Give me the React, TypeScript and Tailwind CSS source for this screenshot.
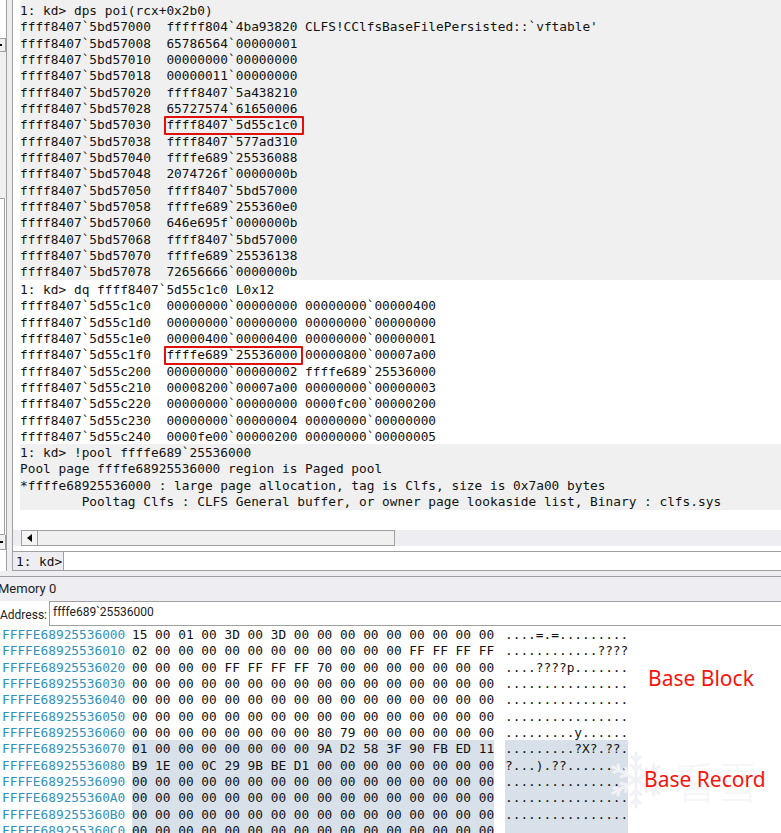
const dpsLines = [
  "1: kd> dps poi(rcx+0x2b0)",
  "ffff8407`5bd57000  fffff804`4ba93820 CLFS!CClfsBaseFilePersisted::`vftable'",
  "ffff8407`5bd57008  65786564`00000001",
  "ffff8407`5bd57010  00000000`00000000",
  "ffff8407`5bd57018  00000011`00000000",
  "ffff8407`5bd57020  ffff8407`5a438210",
  "ffff8407`5bd57028  65727574`61650006",
  "ffff8407`5bd57030  ffff8407`5d55c1c0",
  "ffff8407`5bd57038  ffff8407`577ad310",
  "ffff8407`5bd57040  ffffe689`25536088",
  "ffff8407`5bd57048  2074726f`0000000b",
  "ffff8407`5bd57050  ffff8407`5bd57000",
  "ffff8407`5bd57058  ffffe689`255360e0",
  "ffff8407`5bd57060  646e695f`0000000b",
  "ffff8407`5bd57068  ffff8407`5bd57000",
  "ffff8407`5bd57070  ffffe689`25536138",
  "ffff8407`5bd57078  72656666`0000000b",
];

const dqLines = [
  "1: kd> dq ffff8407`5d55c1c0 L0x12",
  "ffff8407`5d55c1c0  00000000`00000000 00000000`00000400",
  "ffff8407`5d55c1d0  00000000`00000000 00000000`00000000",
  "ffff8407`5d55c1e0  00000400`00000400 00000000`00000001",
  "ffff8407`5d55c1f0  ffffe689`25536000 00000800`00007a00",
  "ffff8407`5d55c200  00000000`00000002 ffffe689`25536000",
  "ffff8407`5d55c210  00008200`00007a00 00000000`00000003",
  "ffff8407`5d55c220  00000000`00000000 0000fc00`00000200",
  "ffff8407`5d55c230  00000000`00000004 00000000`00000000",
  "ffff8407`5d55c240  0000fe00`00000200 00000000`00000005",
];

const poolLines = [
  "1: kd> !pool ffffe689`25536000",
  "Pool page ffffe68925536000 region is Paged pool",
  "*ffffe68925536000 : large page allocation, tag is Clfs, size is 0x7a00 bytes",
  "        Pooltag Clfs : CLFS General buffer, or owner page lookaside list, Binary : clfs.sys",
];

const zeros = "00 00 00 00 00 00 00 00 00 00 00 00 00 00 00 00";
const dots = "................";

const memRows = [
  { addr: "FFFFE68925536000", hex: "15 00 01 00 3D 00 3D 00 00 00 00 00 00 00 00 00", ascii: "....=.=.........", sel: false },
  { addr: "FFFFE68925536010", hex: "02 00 00 00 00 00 00 00 00 00 00 00 FF FF FF FF", ascii: "............????", sel: false },
  { addr: "FFFFE68925536020", hex: "00 00 00 00 FF FF FF FF 70 00 00 00 00 00 00 00", ascii: "....????p.......", sel: false },
  { addr: "FFFFE68925536030", hex: zeros, ascii: dots, sel: false },
  { addr: "FFFFE68925536040", hex: zeros, ascii: dots, sel: false },
  { addr: "FFFFE68925536050", hex: zeros, ascii: dots, sel: false },
  { addr: "FFFFE68925536060", hex: "00 00 00 00 00 00 00 00 80 79 00 00 00 00 00 00", ascii: ".........y......", sel: false },
  { addr: "FFFFE68925536070", hex: "01 00 00 00 00 00 00 00 9A D2 58 3F 90 FB ED 11", ascii: ".........?X?.??.", sel: true },
  { addr: "FFFFE68925536080", hex: "B9 1E 00 0C 29 9B BE D1 00 00 00 00 00 00 00 00", ascii: "?...).??........", sel: true },
  { addr: "FFFFE68925536090", hex: zeros, ascii: dots, sel: true },
  { addr: "FFFFE689255360A0", hex: zeros, ascii: dots, sel: true },
  { addr: "FFFFE689255360B0", hex: zeros, ascii: dots, sel: true },
  { addr: "FFFFE689255360C0", hex: zeros, ascii: dots, sel: true },
];

function Lines({ lines }: { lines: string[] }) {
  return (
    <>
      {lines.map((line, i) => (
        <div key={i} className="h-[16.33px] whitespace-pre leading-[18px]">{line}</div>
      ))}
    </>
  );
}

function LeftStrip() {
  return (
    <div className="flex h-[571px] w-[13px] shrink-0">
      <div className="flex w-[7px] flex-col border-r border-[#a0a0a0] bg-white">
        <div className="h-[38px]" />
        <div className="flex h-[14px] items-center border-y border-r border-[#a0a0a0] bg-[#f0f0f0]">
          <div className="h-[2px] w-[2px] bg-black" />
        </div>
        <div className="h-[146px] bg-[#f0f0f0]" />
        <div className="h-[337px] w-[5px] border-y border-r border-[#a0a0a0] bg-white" />
        <div className="flex h-[15px] items-center border-b border-r border-[#a0a0a0] bg-[#f0f0f0]">
          <div className="h-[2px] w-[3px] bg-black" />
        </div>
      </div>
      <div className="w-[6px] border-r border-[#a0a0a0] bg-[#eeeef2]" />
    </div>
  );
}

function Watermark() {
  const arm = "M0 0V-34M0 -12L-7 -19M0 -12L7 -19M0 -23L-6 -29M0 -23L6 -29";
  return (
    <>
      <svg className="absolute left-[611px] top-[751px]" width="50" height="58" viewBox="-30 -35 60 70" fill="none" stroke="#f0f2f6" strokeWidth="3.5">
        {[0, 60, 120, 180, 240, 300].map((a) => (
          <path key={a} d={arm} transform={`rotate(${a})`} />
        ))}
      </svg>
      <span className="absolute left-[673px] top-[750px] font-['Noto_Sans_CJK_SC',sans-serif] text-[43px] leading-[60px] font-light whitespace-pre text-[#f6f6f8]">
        看雪
      </span>
    </>
  );
}

export default function App() {
  return (
    <div className="relative h-[833px] w-[781px] overflow-hidden bg-white font-['DejaVu_Sans_Mono',monospace] text-[12.8px] leading-[16.33px] text-[#111]">
      <div className="flex">
        <LeftStrip />
        <div className="flex h-[571px] min-w-0 flex-1 flex-col">
          <div className="h-[510px] pl-[7px]">
            <div className="h-[280px] bg-[#f0f0f0] pt-[2px]">
              <Lines lines={dpsLines} />
            </div>
            <div className="h-[164px] pt-px">
              <Lines lines={dqLines} />
            </div>
            <div className="h-[66px] bg-[#f0f0f0]">
              <Lines lines={poolLines} />
            </div>
          </div>
          <div className="mt-[20px] flex h-[17px] items-center bg-[#eeeef2] pl-[8px]">
            <div className="flex h-[16px] w-[374px] border border-[#a0a0a0] bg-[#f0f0f0]">
              <div className="flex w-[16px] items-center justify-center border-r border-[#a0a0a0] bg-[#f4f4f4]">
                <div className="h-0 w-0 border-y-[4px] border-r-[5px] border-y-transparent border-r-black" />
              </div>
            </div>
          </div>
          <div className="h-[5px]" />
          <div className="flex h-[20px] border-y border-[#a0a0a0]">
            <div className="flex w-[51px] items-center border-r border-[#a0a0a0] bg-[#eeeef2] pl-[3px] pt-[2px]">1: kd&gt;</div>
          </div>
        </div>
      </div>
      <div className="h-[6px] border-b border-[#a0a0a0] bg-[#eeeef2]" />
      <div className="flex h-[24px] items-center bg-[#eeeef2] font-['Roboto',sans-serif] text-[13px] text-[#222]">
        <span className="ml-[-2px]">Memory 0</span>
      </div>
      <div className="flex h-[25px] font-['Roboto',sans-serif] text-[12px] text-[#222]">
        <div className="flex w-[49px] items-center pt-[4px]">Address:</div>
        <div className="flex-1 border-y border-l border-[#a0a0a0] pl-[3px] pt-[2px]">ffffe689`25536000</div>
      </div>
      <div>
        {memRows.map((row) => (
          <div key={row.addr} className="flex h-[16.33px] whitespace-pre leading-[18px]">
            <div className="w-[132px] pl-[2px] text-[#2f93bd]">{row.addr}</div>
            <div className={`w-[362px] ${row.sel ? "bg-[#d8e0ea]" : ""}`}>{row.hex}</div>
            <div className={`ml-[11px] w-[123px] ${row.sel ? "bg-[#d8e0ea]" : ""}`}>{row.ascii}</div>
          </div>
        ))}
      </div>

      <div className="absolute left-[164px] top-[116px] h-[19px] w-[140px] rounded-[1px] border-2 border-[#e0100c]" />
      <div className="absolute left-[164px] top-[346px] h-[19px] w-[139px] rounded-[1px] border-2 border-[#e0100c]" />
      <Watermark />
      <div className="absolute left-[648px] top-[665px] font-['Noto_Sans',sans-serif] text-[21px] leading-[26px] text-[#f5150f]">Base Block</div>
      <div className="absolute left-[644px] top-[766px] font-['Noto_Sans',sans-serif] text-[21px] leading-[26px] text-[#f5150f]">Base Record</div>
    </div>
  );
}
